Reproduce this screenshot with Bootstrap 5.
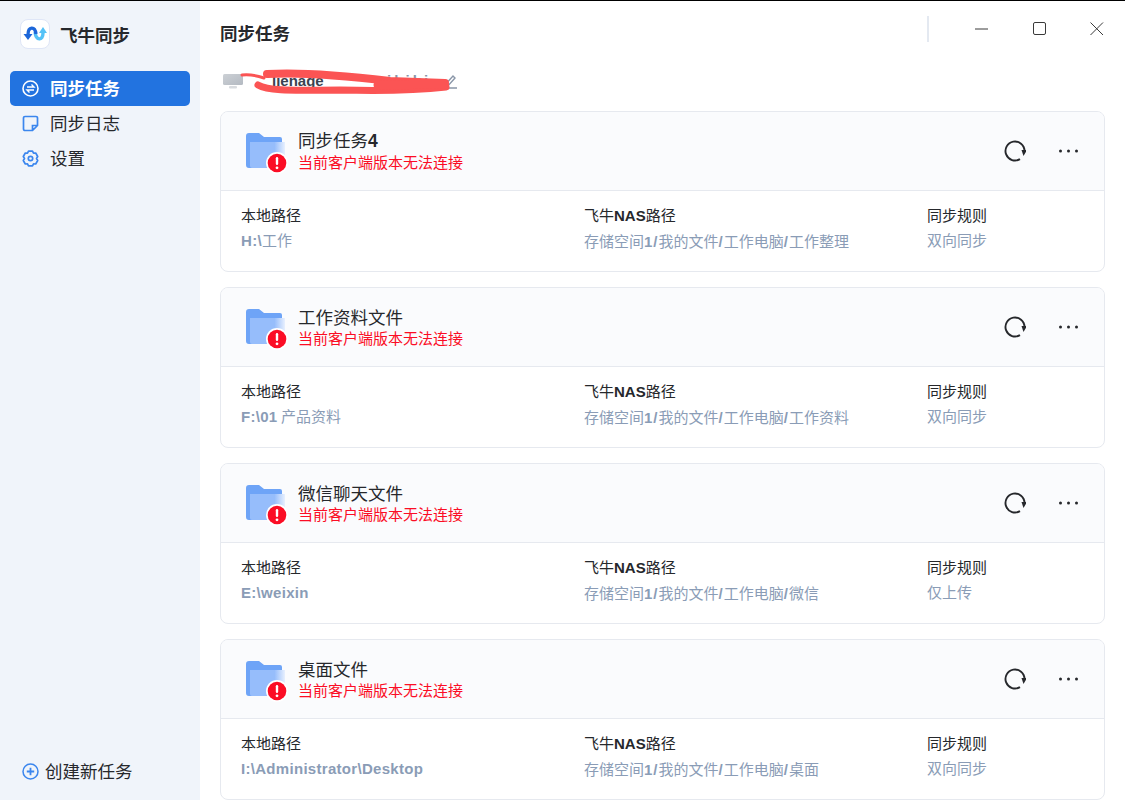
<!DOCTYPE html>
<html lang="zh">
<head>
<meta charset="utf-8">
<title>飞牛同步</title>
<link href="https://cdn.jsdelivr.net/npm/bootstrap@5.3.0/dist/css/bootstrap.min.css" rel="stylesheet">
<style>
html,body{height:800px;overflow:hidden}
body{font-family:"Noto Sans CJK SC","Liberation Sans",sans-serif;color:#26282c;background:#fff;border-top:1px solid #000;font-size:15px}
b{font-family:"Liberation Sans",sans-serif;font-weight:700}
.shell{height:799px}
.side{width:200px;background:#f0f4fa;flex:none}
.brand{height:70px;padding:18px 0 0 20px;gap:10px;font-size:17.5px;font-weight:700;line-height:32px}
.logo{width:30px;height:30px;border-radius:8px;background:#fff;border:1px solid #dfe6f7}
.menu-row{margin:0 10px;height:35px;padding-left:12px;gap:11px;font-size:17.5px;border-radius:5px;line-height:35px}
.menu-row span{position:relative;top:-1px}
.menu-row.active-row{background:#2273e0;color:#fff;font-weight:700}
.new-task{margin-top:auto;height:58px;padding:0 0 0 22px;gap:6px;font-size:17.5px}
.main-pane{min-width:0;padding-left:20px;padding-right:20px;position:relative}
.title-row{height:66px;flex:none;padding-top:19px;font-size:17.5px;font-weight:700;line-height:26px}
.win-ctl{top:15px;right:0;width:198px;height:26px;border-left:2px solid #e4e9f1}
.win-ctl svg{position:absolute}
.device-row{height:44px;flex:none;padding:0 0 16px 3px;font-size:15px;position:relative;color:#3a4350}
.dev-name{width:115px;margin-left:29px;flex:none}
.dev-rest{width:56px;flex:none;color:#8a96a8;letter-spacing:3px}
.scribble{left:20px;top:1px}
.task-card{height:161px;border:1px solid #e6e9ef;border-radius:8px;margin-bottom:15px;overflow:hidden;flex:none}
.task-head{height:79px;background:#fafbfd;border-bottom:1px solid #e6e9ef;padding-left:25px;padding-right:26px}
.folder-wrap{width:41px;height:42px;position:relative;margin-right:11px;flex:none}
.alert-dot{right:-1px;bottom:-2px}
.task-text{padding-bottom:3px}
.task-name{font-size:17.5px;line-height:24px;color:#26282c}
.task-err{font-size:15px;line-height:18px;color:#fb0d25}
.task-tools{gap:33px;margin-right:0}
.task-body{display:grid;grid-template-columns:343px 343px 1fr;padding:12px 0 0 20px}
.lbl{font-size:15px;line-height:24px;color:#26282c}
.val{font-size:15px;line-height:24px;color:#8a9cb6;margin-top:1px}
.val b{letter-spacing:.3px}
.val.nas-path b{letter-spacing:1px}
</style>
</head>
<body>
<div class="shell d-flex">
  <aside class="side d-flex flex-column">
    <div class="brand d-flex">
      <span class="logo d-flex align-items-center justify-content-center">
        <svg width="24" height="20" viewBox="0 0 24 20" fill="none"><path d="M12 8c1 9 8 9 8 1" stroke="#55c2f7" stroke-width="3.400"/><path d="M16 9h8l-4-6z" fill="#55c2f7"/><path d="M5 11C5 2 12 2 13 10" stroke="#1c66d9" stroke-width="3.400"/><path d="M.5 10h9L5 16z" fill="#1c66d9"/></svg>
      </span>
      <span>飞牛同步</span>
    </div>
    <div class="menu-row active-row d-flex align-items-center">
      <svg width="17" height="17" viewBox="0 0 17 17" fill="none" stroke="#fff" stroke-width="1.600"><circle cx="8.500" cy="8.500" r="7.500"/><path d="M5 7h7L9.500 4.500M12 10H5l2.500 2.500" stroke-width="1.400"/></svg>
      <span>同步任务</span>
    </div>
    <div class="menu-row d-flex align-items-center">
      <svg width="17" height="17" viewBox="0 0 17 17" fill="none" stroke="#3b86ee" stroke-width="1.700"><path d="M15.500 10.500V3a1.500 1.500 0 0 0-1.500-1.500H3A1.500 1.500 0 0 0 1.500 3v11A1.500 1.500 0 0 0 3 15.500h7.500zM15.500 10.500h-5v5"/></svg>
      <span>同步日志</span>
    </div>
    <div class="menu-row d-flex align-items-center">
      <svg width="17" height="17" viewBox="0 0 17 17" fill="none" stroke="#3b86ee" stroke-width="1.700" stroke-linejoin="round"><path d="M6.500 1.200h4l1 2 2.200-.2 2 3.500-1.200 2 1.200 2-2 3.500-2.200-.2-1 2h-4l-1-2-2.200.2-2-3.500 1.200-2-1.200-2 2-3.500 2.200.2z"/><circle cx="8.500" cy="8.500" r="2.200"/></svg>
      <span>设置</span>
    </div>
    <div class="new-task d-flex align-items-center">
      <svg width="17" height="17" viewBox="0 0 17 17" fill="none" stroke="#3b86ee" stroke-width="1.500"><circle cx="8.500" cy="8.500" r="7.500"/><path d="M8.500 4.800v7.400M4.800 8.500h7.400" stroke-width="1.800"/></svg>
      <span>创建新任务</span>
    </div>
  </aside>
  <main class="main-pane flex-grow-1 d-flex flex-column">
    <div class="title-row">同步任务</div>
    <div class="win-ctl position-absolute">
      <svg width="14" height="2" style="left:46px;top:12px"><path d="M0 1h13" stroke="#3a3a3a" stroke-width="1"/></svg>
      <svg width="14" height="14" style="left:104px;top:6px" fill="none"><rect x=".5" y=".5" width="12" height="12" rx="1.500" stroke="#3a3a3a"/></svg>
      <svg width="14" height="14" style="left:161px;top:6px" fill="none"><path d="M.5.500l12.500 12.500M13 .500L.5 13" stroke="#3a3a3a"/></svg>
    </div>
    <div class="device-row d-flex align-items-center">
      <svg width="20" height="15" viewBox="0 0 20 15"><defs><linearGradient id="mg" x1="0" x2="1" y1="0" y2="1"><stop offset="0" stop-color="#ccd0d5"/><stop offset="1" stop-color="#b4bac2"/></linearGradient></defs><rect width="20" height="11" rx="1.500" fill="url(#mg)"/><rect x="6" y="12" width="8" height="2.500" rx="1" fill="#d8dbdf"/></svg>
      <b class="dev-name">lienage</b>
      <b class="dev-rest">ikiki</b>
      <svg width="14" height="16" viewBox="0 0 14 16" fill="none" stroke="#8a96a8" stroke-width="1.400"><path d="M1 13L10 3l2 2-8 9-3 1zM0 15h14"/></svg>
      <svg class="scribble position-absolute" width="212" height="28" viewBox="0 0 212 28" fill="none" stroke="#fb5454" stroke-linecap="round"><path d="M2 7c8-1 16 1 22 3" stroke-width="3"/><path d="M27 6c33-2 73 1 123 7l55 2" stroke-width="8"/><path d="M18 17c12 7 42 5 82 5 40 1 80 0 106-3" stroke-width="7"/><path d="M138 17l66-1" stroke-width="9"/></svg>
    </div>

    <div class="task-card">
      <div class="task-head d-flex align-items-center">
        <div class="folder-wrap">
          <svg width="41" height="42" viewBox="0 0 41 42"><defs><linearGradient id="fg" x1="0" x2="1" y1="0" y2="0"><stop offset=".7" stop-color="#96bdfb"/><stop offset="1" stop-color="#e8f0fe"/></linearGradient></defs><path d="M0 6a3 3 0 0 1 3-3h10l5 4h16a2 2 0 0 1 2 2v29H3a3 3 0 0 1-3-3z" fill="#6ea4f7"/><path d="M4 12h35v26H6a2 2 0 0 1-2-2z" fill="url(#fg)"/></svg>
          <svg class="alert-dot position-absolute" width="22" height="22" viewBox="0 0 22 22"><circle cx="11" cy="11" r="11" fill="#fff"/><circle cx="11" cy="11" r="9.300" fill="#fb0d25"/><rect x="9.800" y="5" width="2.400" height="8" rx="1.200" fill="#fff"/><circle cx="11" cy="15.800" r="1.400" fill="#fff"/></svg>
        </div>
        <div class="task-text flex-grow-1"><div class="task-name">同步任务<b>4</b></div><div class="task-err">当前客户端版本无法连接</div></div>
        <div class="task-tools d-flex align-items-center">
          <svg width="22" height="22" viewBox="0 0 22 22" fill="none"><path d="M16 19.100A9.500 9.500 0 1 1 20.500 11" stroke="#26282c" stroke-width="1.900"/><path d="M17.500 10h5.500l-3.500 6z" fill="#26282c"/></svg>
          <svg width="19" height="4" viewBox="0 0 19 4" fill="#26282c"><circle cx="1.500" cy="2" r="1.500"/><circle cx="9.500" cy="2" r="1.500"/><circle cx="17.500" cy="2" r="1.500"/></svg>
        </div>
      </div>
      <div class="task-body">
        <div><div class="lbl">本地路径</div><div class="val"><b>H:\</b>工作</div></div>
        <div><div class="lbl">飞牛<b>NAS</b>路径</div><div class="val nas-path">存储空间<b>1/</b>我的文件<b>/</b>工作电脑<b>/</b>工作整理</div></div>
        <div><div class="lbl">同步规则</div><div class="val">双向同步</div></div>
      </div>
    </div>

    <div class="task-card">
      <div class="task-head d-flex align-items-center">
        <div class="folder-wrap">
          <svg width="41" height="42" viewBox="0 0 41 42"><path d="M0 6a3 3 0 0 1 3-3h10l5 4h16a2 2 0 0 1 2 2v29H3a3 3 0 0 1-3-3z" fill="#6ea4f7"/><path d="M4 12h35v26H6a2 2 0 0 1-2-2z" fill="url(#fg)"/></svg>
          <svg class="alert-dot position-absolute" width="22" height="22" viewBox="0 0 22 22"><circle cx="11" cy="11" r="11" fill="#fff"/><circle cx="11" cy="11" r="9.300" fill="#fb0d25"/><rect x="9.800" y="5" width="2.400" height="8" rx="1.200" fill="#fff"/><circle cx="11" cy="15.800" r="1.400" fill="#fff"/></svg>
        </div>
        <div class="task-text flex-grow-1"><div class="task-name">工作资料文件</div><div class="task-err">当前客户端版本无法连接</div></div>
        <div class="task-tools d-flex align-items-center">
          <svg width="22" height="22" viewBox="0 0 22 22" fill="none"><path d="M16 19.100A9.500 9.500 0 1 1 20.500 11" stroke="#26282c" stroke-width="1.900"/><path d="M17.500 10h5.500l-3.500 6z" fill="#26282c"/></svg>
          <svg width="19" height="4" viewBox="0 0 19 4" fill="#26282c"><circle cx="1.500" cy="2" r="1.500"/><circle cx="9.500" cy="2" r="1.500"/><circle cx="17.500" cy="2" r="1.500"/></svg>
        </div>
      </div>
      <div class="task-body">
        <div><div class="lbl">本地路径</div><div class="val"><b>F:\01</b> 产品资料</div></div>
        <div><div class="lbl">飞牛<b>NAS</b>路径</div><div class="val nas-path">存储空间<b>1/</b>我的文件<b>/</b>工作电脑<b>/</b>工作资料</div></div>
        <div><div class="lbl">同步规则</div><div class="val">双向同步</div></div>
      </div>
    </div>

    <div class="task-card">
      <div class="task-head d-flex align-items-center">
        <div class="folder-wrap">
          <svg width="41" height="42" viewBox="0 0 41 42"><path d="M0 6a3 3 0 0 1 3-3h10l5 4h16a2 2 0 0 1 2 2v29H3a3 3 0 0 1-3-3z" fill="#6ea4f7"/><path d="M4 12h35v26H6a2 2 0 0 1-2-2z" fill="url(#fg)"/></svg>
          <svg class="alert-dot position-absolute" width="22" height="22" viewBox="0 0 22 22"><circle cx="11" cy="11" r="11" fill="#fff"/><circle cx="11" cy="11" r="9.300" fill="#fb0d25"/><rect x="9.800" y="5" width="2.400" height="8" rx="1.200" fill="#fff"/><circle cx="11" cy="15.800" r="1.400" fill="#fff"/></svg>
        </div>
        <div class="task-text flex-grow-1"><div class="task-name">微信聊天文件</div><div class="task-err">当前客户端版本无法连接</div></div>
        <div class="task-tools d-flex align-items-center">
          <svg width="22" height="22" viewBox="0 0 22 22" fill="none"><path d="M16 19.100A9.500 9.500 0 1 1 20.500 11" stroke="#26282c" stroke-width="1.900"/><path d="M17.500 10h5.500l-3.500 6z" fill="#26282c"/></svg>
          <svg width="19" height="4" viewBox="0 0 19 4" fill="#26282c"><circle cx="1.500" cy="2" r="1.500"/><circle cx="9.500" cy="2" r="1.500"/><circle cx="17.500" cy="2" r="1.500"/></svg>
        </div>
      </div>
      <div class="task-body">
        <div><div class="lbl">本地路径</div><div class="val"><b>E:\weixin</b></div></div>
        <div><div class="lbl">飞牛<b>NAS</b>路径</div><div class="val nas-path">存储空间<b>1/</b>我的文件<b>/</b>工作电脑<b>/</b>微信</div></div>
        <div><div class="lbl">同步规则</div><div class="val">仅上传</div></div>
      </div>
    </div>

    <div class="task-card">
      <div class="task-head d-flex align-items-center">
        <div class="folder-wrap">
          <svg width="41" height="42" viewBox="0 0 41 42"><path d="M0 6a3 3 0 0 1 3-3h10l5 4h16a2 2 0 0 1 2 2v29H3a3 3 0 0 1-3-3z" fill="#6ea4f7"/><path d="M4 12h35v26H6a2 2 0 0 1-2-2z" fill="url(#fg)"/></svg>
          <svg class="alert-dot position-absolute" width="22" height="22" viewBox="0 0 22 22"><circle cx="11" cy="11" r="11" fill="#fff"/><circle cx="11" cy="11" r="9.300" fill="#fb0d25"/><rect x="9.800" y="5" width="2.400" height="8" rx="1.200" fill="#fff"/><circle cx="11" cy="15.800" r="1.400" fill="#fff"/></svg>
        </div>
        <div class="task-text flex-grow-1"><div class="task-name">桌面文件</div><div class="task-err">当前客户端版本无法连接</div></div>
        <div class="task-tools d-flex align-items-center">
          <svg width="22" height="22" viewBox="0 0 22 22" fill="none"><path d="M16 19.100A9.500 9.500 0 1 1 20.500 11" stroke="#26282c" stroke-width="1.900"/><path d="M17.500 10h5.500l-3.500 6z" fill="#26282c"/></svg>
          <svg width="19" height="4" viewBox="0 0 19 4" fill="#26282c"><circle cx="1.500" cy="2" r="1.500"/><circle cx="9.500" cy="2" r="1.500"/><circle cx="17.500" cy="2" r="1.500"/></svg>
        </div>
      </div>
      <div class="task-body">
        <div><div class="lbl">本地路径</div><div class="val"><b>I:\Administrator\Desktop</b></div></div>
        <div><div class="lbl">飞牛<b>NAS</b>路径</div><div class="val nas-path">存储空间<b>1/</b>我的文件<b>/</b>工作电脑<b>/</b>桌面</div></div>
        <div><div class="lbl">同步规则</div><div class="val">双向同步</div></div>
      </div>
    </div>
  </main>
</div>
<script src="https://cdn.jsdelivr.net/npm/bootstrap@5.3.0/dist/js/bootstrap.bundle.min.js"></script>
</body>
</html>
